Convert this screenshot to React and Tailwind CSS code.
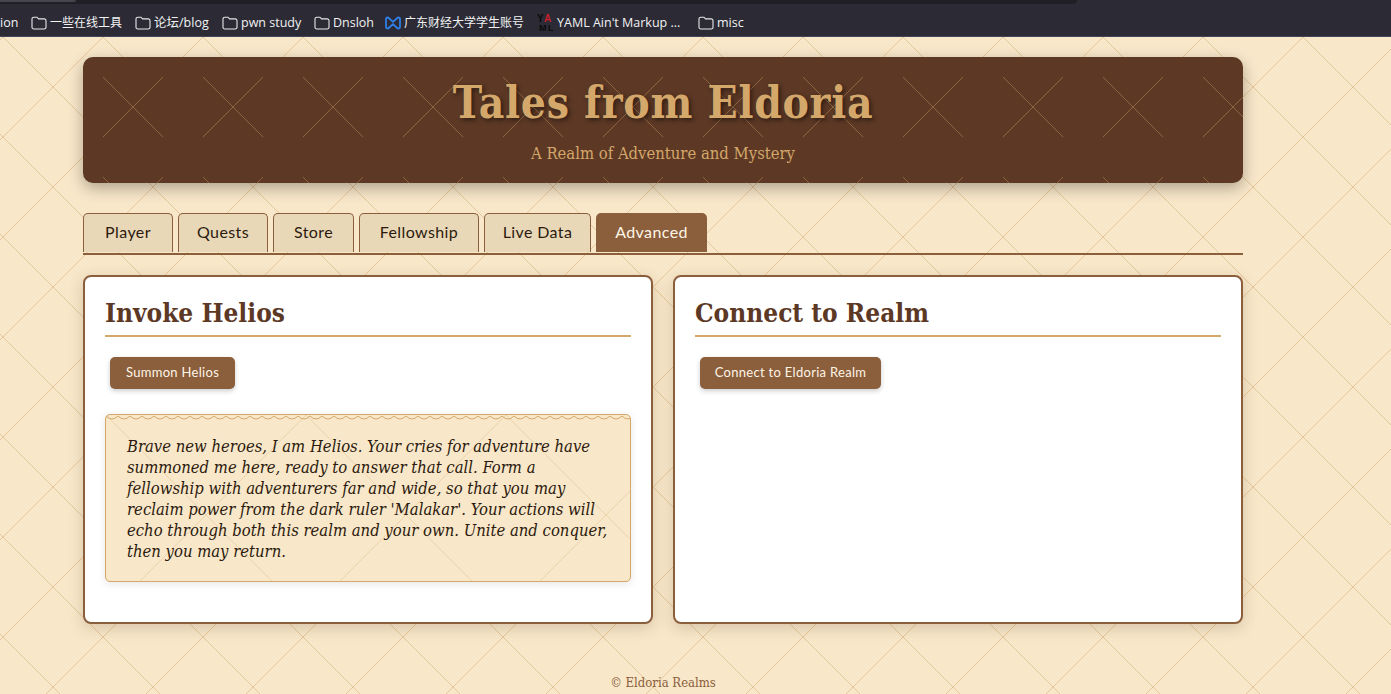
const Folder = () => (
  <svg width="16" height="14" viewBox="0 0 16 14" fill="none" className="shrink-0">
    <path d="M1 3a1.8 1.8 0 0 1 1.8-1.8h3.1l1.7 1.7h5.600A1.8 1.8 0 0 1 15 4.700v6.500a1.8 1.8 0 0 1-1.800 1.800H2.800A1.8 1.8 0 0 1 1 11.200z" stroke="#e8e8ea" strokeWidth="1.1" />
  </svg>
);

const Bowtie = () => (
  <svg width="16" height="14" viewBox="0 0 16 14" fill="none" className="shrink-0">
    <path d="M2.5 1.5C1.5 1.5 1 2 1 3v8c0 1 .5 1.5 1.5 1.5 .7 0 1.2-.4 1.8-1L8 8.2l3.700 3.300c.6.6 1.100 1 1.800 1 1 0 1.500-.5 1.500-1.500V3c0-1-.5-1.500-1.500-1.500-.7 0-1.200.4-1.800 1L8 5.800 4.300 2.500c-.6-.6-1.100-1-1.800-1z" stroke="#2f7fe6" strokeWidth="1.800" />
  </svg>
);

const Yaml = () => (
  <svg width="17" height="18" viewBox="0 0 17 18" className="shrink-0">
    <text x="0" y="8" fontSize="10" fontWeight="700" fontFamily="Liberation Sans, sans-serif" fill="#0c0c0c">Y</text>
    <text x="7" y="8" fontSize="10" fontWeight="700" fontFamily="Liberation Sans, sans-serif" fill="#c8202c">A</text>
    <text x="2" y="17" fontSize="9" fontWeight="700" fontFamily="Liberation Sans, sans-serif" fill="#0c0c0c">M</text>
    <text x="11" y="17" fontSize="9" fontWeight="700" fontFamily="Liberation Sans, sans-serif" fill="#0c0c0c">L</text>
  </svg>
);

const bookmarks = [
  { icon: <Folder />, label: "一些在线工具", w: "w-[91px] text-[12px]" },
  { icon: <Folder />, label: "论坛/blog", w: "w-[74px]" },
  { icon: <Folder />, label: "pwn study", w: "w-[79px]" },
  { icon: <Folder />, label: "Dnsloh", w: "w-[58px]" },
  { icon: <Bowtie />, label: "广东财经大学学生账号", w: "w-[139px] text-[12px]" },
  { icon: <Yaml />, label: "YAML Ain't Markup ...", w: "w-[148px]" },
  { icon: <Folder />, label: "misc", w: "w-[46px]" },
];

const tabs = [
  { label: "Player", w: "w-[90px]" },
  { label: "Quests", w: "w-[90px]" },
  { label: "Store", w: "w-[81px]" },
  { label: "Fellowship", w: "w-[120px]" },
  { label: "Live Data", w: "w-[107px]" },
];

const Card = ({ title, children }) => (
  <section className="flex-1 bg-white border-2 border-[#8b5e3c] rounded-lg p-5 shadow-[0_4px_15px_rgba(92,56,37,0.2)]">
    <h2 className="font-['DejaVu_Serif',serif] font-stretch-condensed text-[26px] leading-[33px] font-bold text-[#5c3825] pb-[5px] border-b-2 border-[#d4a76a] mb-5">
      {title}
    </h2>
    {children}
  </section>
);

const Btn = ({ children, w }) => (
  <button className={`${w} m-[5px] mt-0 h-8 rounded-[5px] bg-[#8b5e3c] text-[#fff5e6] text-[13px] font-['Lato',sans-serif] shadow-[0_2px_5px_rgba(0,0,0,0.2)] tracking-[0.3px]`}>
    {children}
  </button>
);

export default function App() {
  return (
    <div className="h-[694px] overflow-hidden bg-[#f8e7c9]">
      <div className="relative h-[37px] bg-[#2b2a35] border-b border-[#45455a] flex items-center font-['Open_Sans','Noto_Sans_CJK_SC',sans-serif] text-[12.5px] text-[#f2f2f2]">
        <div className="absolute left-0 top-0 h-1 w-[1077px] bg-[#1f1f25] rounded-br-md">
          <div className="h-[2px] w-[76px] bg-[#45454f] rounded-br-md" />
        </div>
        <div className="flex items-center pt-[10px] pl-0">
          <span className="w-[31px] shrink-0 whitespace-nowrap overflow-hidden text-right pr-[13px]">ion</span>
          {bookmarks.map((b) => (
            <div key={b.label} className={`flex items-center gap-[3px] mr-[13px] shrink-0 whitespace-nowrap ${b.w}`}>
              {b.icon}
              <span>{b.label}</span>
            </div>
          ))}
        </div>
      </div>

      <main className="relative h-[657px] overflow-hidden pt-5 pl-[83px] bg-[position:3px_0] bg-[url(data:image/svg+xml,%3Csvg%20xmlns=%22http://www.w3.org/2000/svg%22%20width=%22100%22%20height=%22100%22%3E%3Cg%20stroke=%22%23d4a76a%22%20stroke-opacity=%220.5%22%20fill=%22none%22%3E%3Cpath%20d=%22M0%200L100%20100%22/%3E%3Cpath%20d=%22M100%200L0%20100%22/%3E%3C/g%3E%3C/svg%3E)]">
        <div className="w-[1160px]">
          <header className="h-[126px] rounded-[10px] text-center pt-[18px] bg-[#5c3825] shadow-[0_5px_15px_rgba(0,0,0,0.3)] bg-[url(data:image/svg+xml,%3Csvg%20xmlns=%22http://www.w3.org/2000/svg%22%20width=%22100%22%20height=%22100%22%3E%3Cg%20stroke=%22%23d4a76a%22%20stroke-opacity=%220.4%22%20fill=%22none%22%3E%3Cpath%20d=%22M20%2020L80%2080%22/%3E%3Cpath%20d=%22M80%2020L20%2080%22/%3E%3C/g%3E%3C/svg%3E)]">
            <h1 className="font-['DejaVu_Serif',serif] font-stretch-condensed text-[44px] leading-[56px] font-bold text-[#d4a76a] tracking-[0.7px] [text-shadow:2px_2px_4px_rgba(0,0,0,0.5)]">
              Tales from Eldoria
            </h1>
            <p className="mt-3 font-['DejaVu_Serif',serif] font-stretch-condensed text-[16.5px] leading-[21px] text-[#d4a76a]">
              A Realm of Adventure and Mystery
            </p>
          </header>

          <nav className="mt-[30px] mb-5 flex gap-[5px] border-b-2 border-[#8b5e3c] pb-px font-['Lato',sans-serif] text-[16px] tracking-[0.4px]">
            {tabs.map((t) => (
              <div key={t.label} className={`${t.w} h-[39px] pb-[2px] flex items-center justify-center bg-[#e8d8b8] text-[#2c1a0e] border border-b-0 border-[#8b5e3c] rounded-t-[5px]`}>
                {t.label}
              </div>
            ))}
            <div className="w-[111px] h-[39px] pb-[2px] flex items-center justify-center bg-[#8b5e3c] text-[#fff5e6] rounded-t-[5px]">
              Advanced
            </div>
          </nav>

          <div className="flex gap-5 items-stretch">
            <Card title="Invoke Helios">
              <Btn w="w-[125px]">Summon Helios</Btn>
              <div className="relative mt-5 mb-5 pt-[21px] pb-[19px] pl-[21px] pr-[19px] border border-[#d4a76a] rounded-[5px] bg-[#f8e7c9] shadow-[0_2px_8px_rgba(0,0,0,0.1)] bg-[url(data:image/svg+xml,%3Csvg%20xmlns=%22http://www.w3.org/2000/svg%22%20width=%22200%22%20height=%22200%22%3E%3Cg%20stroke=%22%23d4a76a%22%20stroke-opacity=%220.3%22%20fill=%22none%22%3E%3Cpath%20d=%22M0%200L200%20200%22/%3E%3Cpath%20d=%22M200%200L0%20200%22/%3E%3C/g%3E%3C/svg%3E)]">
                <div className="absolute left-0 right-0 top-0 h-[6px] bg-repeat-x bg-[url(data:image/svg+xml,%3Csvg%20xmlns=%22http://www.w3.org/2000/svg%22%20width=%2212%22%20height=%226%22%3E%3Cpath%20d=%22M0%201Q6%207%2012%201%22%20stroke=%22%23d4a76a%22%20fill=%22none%22/%3E%3C/svg%3E)]" />
                <p className="font-['DejaVu_Serif',serif] font-stretch-condensed italic text-[16.5px] leading-[21px] text-[#2c1a0e] whitespace-nowrap">
                  Brave new heroes, I am Helios. Your cries for adventure have<br />
                  summoned me here, ready to answer that call. Form a<br />
                  fellowship with adventurers far and wide, so that you may<br />
                  reclaim power from the dark ruler 'Malakar'. Your actions will<br />
                  echo through both this realm and your own. Unite and conquer,<br />
                  then you may return.
                </p>
              </div>
            </Card>
            <Card title="Connect to Realm">
              <Btn w="w-[181px]">Connect to Eldoria Realm</Btn>
            </Card>
          </div>

          <footer className="mt-[50px] text-center font-['DejaVu_Serif',serif] font-stretch-condensed text-[13px] leading-[17px] text-[#8b5e3c]">
            © Eldoria Realms
          </footer>
        </div>
      </main>
    </div>
  );
}
